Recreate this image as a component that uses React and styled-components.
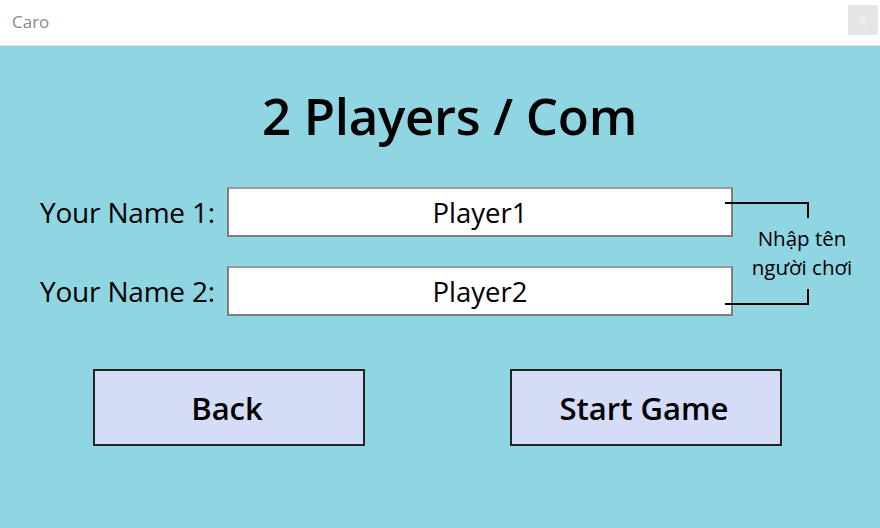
import React from "react";
import styled, { createGlobalStyle } from "styled-components";

const Global = createGlobalStyle`
  html, body { margin: 0; padding: 0; }
  body { font-family: "Open Sans", "Noto Sans", sans-serif; }
  #root { width: 880px; height: 528px; }
`;

const Window = styled.div`
  width: 880px;
  height: 528px;
  display: flex;
  flex-direction: column;
  background: #90d5e2;
  overflow: hidden;
`;

const TitleBar = styled.div`
  height: 46px;
  flex: none;
  background: #ffffff;
  border-bottom: 1px solid #e4e4e4;
  display: flex;
  align-items: center;
  justify-content: space-between;
  padding: 0 2px 0 12px;
  box-sizing: border-box;
`;

const TitleText = styled.span`
  font-size: 17px;
  color: #8a8a8a;
  margin-top: -2px;
`;

const CloseButton = styled.div`
  width: 30px;
  height: 30px;
  background: #e6e6e6;
  color: #f4f4f4;
  font-size: 14px;
  display: flex;
  align-items: center;
  justify-content: center;
  margin-top: -6px;
`;

const Content = styled.div`
  flex: 1;
  display: flex;
  flex-direction: column;
  align-items: center;
`;

const Heading = styled.h1`
  margin: 33px 0 0 19px;
  font-size: 51px;
  font-weight: 600;
  color: #000;
  line-height: 72px;
  letter-spacing: -0.3px;
`;

const FormArea = styled.div`
  align-self: flex-start;
  display: flex;
  align-items: center;
  margin-top: 36px;
  padding-left: 40px;
`;

const Fields = styled.div`
  display: flex;
  flex-direction: column;
  gap: 29px;
`;

const Row = styled.div`
  display: flex;
  align-items: center;
  gap: 12px;
`;

const Label = styled.span`
  width: 175px;
  font-size: 28px;
  color: #000;
  white-space: nowrap;
  letter-spacing: -0.2px;
`;

const NameInput = styled.div`
  width: 506px;
  height: 50px;
  box-sizing: border-box;
  background: #fff;
  border: 2px solid #7d7d7d;
  border-top-color: #9a9a9a;
  display: flex;
  align-items: center;
  justify-content: center;
  font-size: 27.5px;
  color: #000;
`;

const Annotation = styled.div`
  margin-left: -8px;
  width: 130px;
  display: flex;
  flex-direction: column;
  margin-top: 4px;
`;

const Bracket = styled.svg`
  display: block;
  width: 85px;
  height: 16px;
  margin: ${(p) => (p.$bottom ? "7px 0 0" : "0 0 6px")};
`;

const Note = styled.div`
  font-size: 20.5px;
  line-height: 29px;
  text-align: center;
  color: #000;
  margin: 0 0 0 17px;
  width: 120px;
  white-space: nowrap;
`;

const Buttons = styled.div`
  align-self: flex-start;
  display: flex;
  gap: 145px;
  margin-top: 53px;
  margin-left: 93px;
`;

const Button = styled.div`
  width: 272px;
  height: 77px;
  box-sizing: border-box;
  background: #d4dcf8;
  border: 2px solid #222;
  display: flex;
  align-items: center;
  justify-content: center;
  font-size: 31px;
  font-weight: 600;
  color: #000;
  padding-right: 4px;
`;

export default function App() {
  return (
    <>
      <Global />
      <Window>
        <TitleBar>
          <TitleText>Caro</TitleText>
          <CloseButton>x</CloseButton>
        </TitleBar>
        <Content>
          <Heading>2 Players / Com</Heading>
          <FormArea>
            <Fields>
              <Row>
                <Label>Your Name 1:</Label>
                <NameInput>Player1</NameInput>
              </Row>
              <Row>
                <Label>Your Name 2:</Label>
                <NameInput>Player2</NameInput>
              </Row>
            </Fields>
            <Annotation>
              <Bracket viewBox="0 0 85 16">
                <path d="M0 1 H83 V16" fill="none" stroke="#000" strokeWidth="2" />
              </Bracket>
              <Note>
                Nhập tên
                <br />
                người chơi
              </Note>
              <Bracket viewBox="0 0 85 16" $bottom>
                <path d="M83 0 V15 H0" fill="none" stroke="#000" strokeWidth="2" />
              </Bracket>
            </Annotation>
          </FormArea>
          <Buttons>
            <Button>Back</Button>
            <Button>Start Game</Button>
          </Buttons>
        </Content>
      </Window>
    </>
  );
}
